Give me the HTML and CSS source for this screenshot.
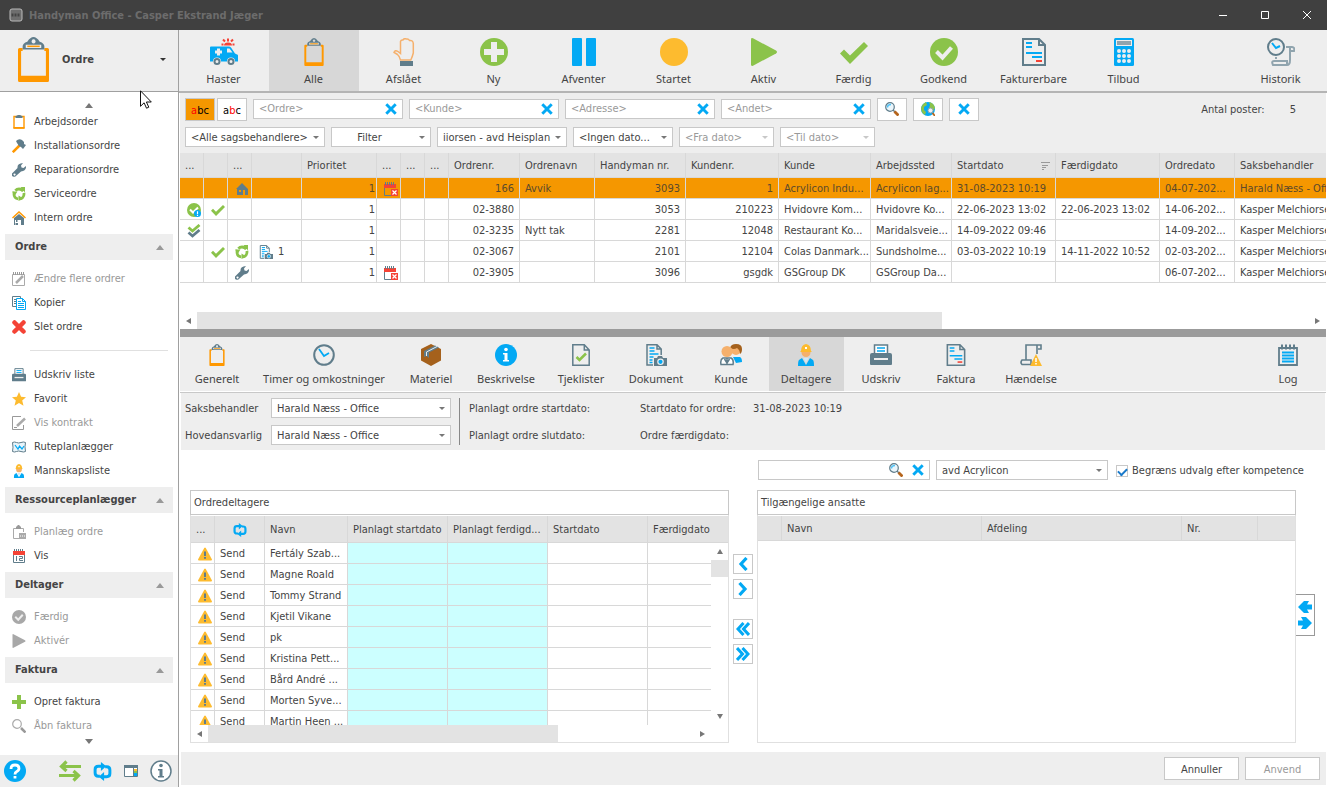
FILE: index.html
```html
<!DOCTYPE html>
<html lang="da">
<head>
  <meta charset="UTF-8" />
  <meta name="viewport" content="width=device-width, initial-scale=1.0"/>
  <title>Handyman Office</title>
  <link rel="stylesheet" href="styles.css">
</head>
<body>
  <!-- Ikoner -->
  <svg class="sprite" aria-hidden="true">
    <symbol id="i-clip" viewBox="0 0 20 29">
      <path fill="#ff9800" d="M0 8q0-1 1-1h2v2H2v16h16V9h-1V7h2q1 0 1 1v20q0 1-1 1H1q-1 0-1-1z"/>
      <path fill="#607d8b" fill-rule="evenodd" d="M3 8V6q0-2 3-3 2-3 4-3t4 3q3 1 3 3v2zM10 1.500a1.300 1.300 0 1 0 .1 0zM5 5v2h10V5z"/>
      <path stroke="#ff9800" d="M6 6h8"/>
    </symbol>
    <symbol id="i-order" viewBox="0 0 14 14">
      <path fill="#fff" stroke="#ff9800" stroke-width="1.400" d="M2 1.500h10v11.300H2z"/><path fill="#ff9800" d="M1.500 12h11v1.800h-11z"/><path fill="#607d8b" d="M3.500 3V1.300L6 0h2l2.500 1.300V3z"/>
    </symbol>
    <symbol id="i-ambulance" viewBox="0 0 28 27">
      <path fill="#03a9f4" d="M0 9q0-1 1-1h18q1 0 2 1l4 6 2 1q1 0 1 1v6H0z"/>
      <path fill="#eee" d="M7 10h3v2h2v3h-2v2H7v-2H5v-3h2zM17 10h2.500l3 4H17z"/>
      <circle cx="7" cy="23" r="4" fill="#eee"/><circle cx="21" cy="23" r="4" fill="#eee"/>
      <circle cx="7" cy="23" r="2.500" fill="none" stroke="#607d8b" stroke-width="2"/><circle cx="21" cy="23" r="2.500" fill="none" stroke="#607d8b" stroke-width="2"/>
      <path fill="#f44336" d="M14 7q0-3 4-3t4 3z"/>
      <path stroke="#f44336" stroke-width="2" d="M18 0v3M13 1l2 2M23 1l-2 2M11.500 6h2M22.500 6h2"/>
    </symbol>
    <symbol id="i-hand" viewBox="0 0 22 28">
      <path fill="none" stroke="#f5b06c" stroke-width="1.500" d="M7.500 22q-1-4-3-5.500L1 14.500q1-3 4-1l2.500 2V3.500q.5-2 2.500-1.500 1-2 3.500-1 2-.5 3 1.500 3.500-.5 3.800 3V15q-1 4-2.500 7z"/>
      <path fill="#607d8b" d="M7 23h13v5H7z"/>
    </symbol>
    <symbol id="i-new" viewBox="0 0 28 28">
      <circle cx="14" cy="14" r="14" fill="#8bc34a"/><path fill="#eee" d="M11 4h6v7h7v6h-7v7h-6v-7H4v-6h7z"/>
    </symbol>
    <symbol id="i-pause" viewBox="0 0 24 28"><path fill="#03a9f4" d="M1 0h8q1 0 1 1v26q0 1-1 1H1q-1 0-1-1V1q0-1 1-1zM15 0h8q1 0 1 1v26q0 1-1 1h-8q-1 0-1-1V1q0-1 1-1z"/></symbol>
    <symbol id="i-dot" viewBox="0 0 28 28"><circle cx="14" cy="14" r="14" fill="#fdbb2f"/></symbol>
    <symbol id="i-play" viewBox="0 0 26 28"><path fill="currentColor" d="M0 1.500Q0-.5 2 .3l23 12.200q2 1.500 0 3L2 27.700q-2 .8-2-1.200z"/></symbol>
    <symbol id="i-check" viewBox="0 0 28 28"><path fill="#8bc34a" d="M0 15.500l4-4 6 6L24 4l4 4-18 18z"/></symbol>
    <symbol id="i-approved" viewBox="0 0 28 28">
      <circle cx="14" cy="14" r="14" fill="currentColor"/><path fill="none" stroke="#eee" stroke-width="4" d="M6.500 13.500l6 6L21.500 9.500"/>
    </symbol>
    <symbol id="i-invoice" viewBox="0 0 24 28">
      <path fill="none" stroke="#607d8b" stroke-width="2" d="M1 1h16l6 6v20H1zM17 1v6h6"/>
      <path stroke="#03a9f4" stroke-width="2" d="M4 5h6M4 9h6M4 15h16M10 19h10"/><path stroke="#f44336" stroke-width="2" d="M14 23h6"/>
    </symbol>
    <symbol id="i-calc" viewBox="0 0 20 28">
      <rect width="20" height="28" rx="1.500" fill="#03a9f4"/><path fill="#eee" d="M2 2h16v6H2z"/><path fill="#90a4ae" d="M3 3h14v4H3z"/>
      <path fill="none" stroke="#eee" stroke-width="4" stroke-linecap="round" stroke-dasharray="0 5" d="M5 13h11M5 18h11M5 23h11"/>
    </symbol>
    <symbol id="i-history" viewBox="0 0 28 28">
      <circle cx="9" cy="9" r="8" fill="none" stroke="#607d8b" stroke-width="2"/><path fill="none" stroke="#03a9f4" stroke-width="2" d="M5 5l4 5 4-2"/>
      <path fill="none" stroke="#90a4ae" stroke-width="2" d="M19 9h6q3 0 2 4h-3M23 9v13q0 5-3 5H6q-2-4 1-4h13v4M9 19v2"/>
    </symbol>
    <symbol id="i-hammer" viewBox="0 0 14 14">
      <path stroke="#ff9800" stroke-width="2.500" d="M.800 13.200L8 6"/><path fill="#607d8b" d="M4 2q3-3 6-1l2 2v2l2 1-3 4-2-2-2-1-2-3z"/>
    </symbol>
    <symbol id="i-wrench" viewBox="0 0 14 14">
      <path fill="#607d8b" d="M11 0L9 2.500l.5 2 2 .5L14 3q.5 5-5 5.500L4.500 12.500q-1.500 2-3.500 1t-1-3L5.500 5Q5 .5 11 0zM2.500 10.500a1 1 0 1 0 .1 0z"/>
    </symbol>
    <symbol id="i-service" viewBox="0 0 14 14">
      <circle cx="7" cy="7" r="5" fill="none" stroke="#8bc34a" stroke-width="2.800" stroke-dasharray="8.900 1.570" stroke-dashoffset="2"/>
      <path fill="#8bc34a" d="M8.500 0h4.500v5.500zM0 4.500h5.500L2.500 9zM6.500 8.500V14l5-2.500z"/>
    </symbol>
    <symbol id="i-house" viewBox="0 0 14 14">
      <path fill="#607d8b" d="M2 7l5-4 5 4v7H9V9H5.500v2H4V9H3v5H2zM3.500 12H6v2H3.500z"/><path fill="none" stroke="#ff9800" stroke-width="1.500" d="M.500 7L7 1l6.500 6"/>
    </symbol>
    <symbol id="i-home" viewBox="0 0 12 12"><path fill="#607d8b" fill-rule="evenodd" d="M0 6l6-6 6 6v6H9V7H7v5H1V6zM3 7v2h2V7z"/></symbol>
    <symbol id="i-notes" viewBox="0 0 14 14">
      <path fill="none" stroke="#aaa" d="M.500 2.500h12v11H.500z"/><path stroke="#999" stroke-width="3" stroke-dasharray="1 1" d="M1 1.500h12"/>
      <path stroke="#aaa" stroke-width="2.500" d="M4 11l7-7"/>
    </symbol>
    <symbol id="i-copy" viewBox="0 0 14 14">
      <path fill="#fff" stroke="#607d8b" d="M.500.500h8v10h-8z"/><path stroke="#607d8b" d="M2 3.500h3M2 5.500h2M2 7.500h2"/>
      <path fill="#fff" stroke="#03a9f4" d="M4.500 2.500h6l3 3v8h-9zM10.500 2.500v3h3M6 5.500h3M6 7.500h6M6 9.500h6M6 11.500h6"/>
    </symbol>
    <symbol id="i-delete" viewBox="0 0 14 14"><path stroke="#f44336" stroke-width="4.500" stroke-linecap="round" d="M2.500 2.500l9 9M11.500 2.500l-9 9"/></symbol>
    <symbol id="i-x" viewBox="0 0 14 14"><path stroke="#03a9f4" stroke-width="3.400" d="M1.500 1.500l11 11M12.500 1.500l-11 11"/></symbol>
    <symbol id="i-print" viewBox="0 0 22 22">
      <path fill="#fff" stroke="#607d8b" stroke-width="1.500" d="M4.500 10V1h13v9"/><path fill="none" stroke="#03a9f4" stroke-width="1.500" d="M7 4h8M7 7h8"/>
      <path fill="#607d8b" d="M2 9h18q2 0 2 2v9q0 1-1 1H1q-1 0-1-1v-9q0-2 2-2z"/><path fill="#eee" d="M4 14h14v2H4z"/>
    </symbol>
    <symbol id="i-star" viewBox="0 0 14 14"><path fill="#fdbb2f" d="M7 0l2.100 4.800 4.900.4-3.800 3.400 1.300 5.200L7 11l-4.500 2.800 1.300-5.200L0 5.200l4.900-.4z"/></symbol>
    <symbol id="i-contract" viewBox="0 0 14 14">
      <path fill="none" stroke="#999" d="M9 .500H.500v13h11V9"/><path stroke="#aaa" stroke-width="2.500" d="M5 10l8-7.500"/><path stroke="#999" d="M2 11.500h3"/>
    </symbol>
    <symbol id="i-map" viewBox="0 0 14 14">
      <path fill="#e8f4fa" stroke="#607d8b" d="M.500 2.500q2-1 4 0t4.500 0 4.500 0q-1 4 0 9-2 1-4.500 0t-4.500 0-4 0q1-4 0-9z"/><path fill="none" stroke="#03a9f4" stroke-width="1.200" d="M3 5l3 4 1.500-3 2.500 3 2-3"/>
    </symbol>
    <symbol id="i-worker" viewBox="0 0 18 22">
      <circle cx="9" cy="8.500" r="4.500" fill="#f5b06c"/><path fill="#fdbb2f" d="M4 7q0-6 5-7 5 1 5 7l1 1H3z"/><path fill="#fff" d="M8 3h2v2H8z"/>
      <path fill="#03a9f4" d="M5 14l4 7 4-7 3 2q1 1 1 6H1q0-5 1-6z"/><path fill="#cfe9f7" d="M6.500 14h5L9 19z"/>
    </symbol>
    <symbol id="i-plan" viewBox="0 0 14 14">
      <path fill="none" stroke="#aaa" d="M7 13.500H1.500v-10h10V7"/><path fill="#999" d="M4 4V2l2-2h1l2 2v2z"/><path fill="#aaa" d="M7 8h7v6H7z"/><path stroke="#fff" stroke-dasharray="1 1" d="M8 11h5"/>
    </symbol>
    <symbol id="i-calendar" viewBox="0 0 14 14">
      <path fill="none" stroke="#607d8b" d="M1.500 5v8.500h11V5"/><path fill="#f44336" d="M1 2h12v4H1z"/><path stroke="#607d8b" stroke-width="2" stroke-dasharray="1 1" d="M2 1h10"/>
      <path fill="none" stroke="#607d8b" d="M4.500 7v5M7 7.500h3.500v2h-3v2h3.500"/>
    </symbol>
    <symbol id="i-plus" viewBox="0 0 14 14"><path fill="#8bc34a" d="M5 0h4v5h5v4H9v5H5V9H0V5h5z"/></symbol>
    <symbol id="i-search-off" viewBox="0 0 14 14"><circle cx="5" cy="5" r="4.300" fill="none" stroke="#aaa" stroke-width="1.200"/><path stroke="#999" stroke-width="2.500" d="M9 9l4.500 4.500"/></symbol>
    <symbol id="i-search" viewBox="0 0 14 14">
      <circle cx="5" cy="5" r="4.300" fill="#eaf6fc" stroke="#607d8b" stroke-width="1.200"/><path fill="none" stroke="#4fc3f7" stroke-width="1.500" d="M2.500 5.500Q2.500 2.500 6 2.500"/>
      <path stroke="#607d8b" stroke-width="1.500" d="M8 8l2 2"/><path stroke="#b5651d" stroke-width="2.800" d="M9.500 9.500l4 4"/>
    </symbol>
    <symbol id="i-globe" viewBox="0 0 14 14">
      <circle cx="7" cy="7" r="7" fill="#03a9f4"/><path fill="#8bc34a" d="M0 6q1-4 5-6l1 3-3 2v3l2 2-1 3Q0 11 0 6zM8 0q5 1 6 6l-2 3-4-3 1-3z"/>
      <circle cx="9.500" cy="8.500" r="2.500" fill="#eee" stroke="#90a4ae"/><path stroke="#b5651d" stroke-width="1.800" d="M11.500 11l2.500 3"/>
    </symbol>
    <symbol id="i-help" viewBox="0 0 22 22">
      <circle cx="11" cy="11" r="11" fill="#03a9f4"/><path fill="none" stroke="#fff" stroke-width="2.800" d="M7 9q0-4 4-4t4 3.500q0 2-2.500 3.200-1.500.8-1.500 2.800M11 16v2.500"/>
    </symbol>
    <symbol id="i-swap" viewBox="0 0 22 20"><path fill="none" stroke="#8bc34a" stroke-width="3.200" d="M22 5.500H3M7.500.5L2.500 5.500l5 4.500M0 14.500h19M14.500 10l5 4.500-5 5"/></symbol>
    <symbol id="i-sync" viewBox="0 0 18 18">
      <path fill="none" stroke="#03a9f4" stroke-width="2.800" d="M6.500 13.500H5q-3 0-3-3V7q0-3 3-3h4M11.500 4.500H13q3 0 3 3V11q0 3-3 3H9"/>
      <path fill="#03a9f4" d="M7.500 0l5 4-5 4.500zM10.500 9.500l-5 4.500 5 4z"/>
    </symbol>
    <symbol id="i-panel" viewBox="0 0 14 12">
      <path fill="#fff" stroke="#607d8b" d="M.500.500h13v11H.500z"/><path fill="#607d8b" d="M0 0h14v3H0z"/>
      <path fill="#fdbb2f" d="M10 4h3v2h-3z"/><path fill="#8bc34a" d="M10 6h3v2h-3z"/><path fill="#03a9f4" d="M10 8h3v3h-3z"/><path stroke="#607d8b" d="M9.500 3v9"/>
    </symbol>
    <symbol id="i-info-o" viewBox="0 0 22 22">
      <circle cx="11" cy="11" r="10" fill="#fff" stroke="#607d8b" stroke-width="1.500"/><circle cx="11" cy="5.500" r="1.800" fill="#607d8b"/><path fill="#607d8b" d="M8 9h4.500v7H14v1.500H8V16h1.500v-5.500H8z"/>
    </symbol>
    <symbol id="i-info" viewBox="0 0 22 22">
      <circle cx="11" cy="11" r="11" fill="#03a9f4"/><circle cx="11" cy="5.500" r="1.800" fill="#fff"/><path fill="#fff" d="M8 9h4.500v7H14v1.500H8V16h1.500v-5.500H8z"/>
    </symbol>
    <symbol id="i-clock" viewBox="0 0 22 22"><circle cx="11" cy="11" r="9.800" fill="none" stroke="#607d8b" stroke-width="2"/><path fill="none" stroke="#03a9f4" stroke-width="1.800" d="M6 5l5 7 5-3"/></symbol>
    <symbol id="i-box" viewBox="0 0 20 22">
      <path fill="#a5611c" d="M0 5l10-5 10 5v11.500L10 22 0 16.500z"/><path fill="#607d8b" d="M3 7L14 1.500l4 2L8 8.500V14l-2.500-2-2.500 1z"/><path fill="none" stroke="#eee" d="M5.500 12V8L16 2.500"/>
    </symbol>
    <symbol id="i-checklist" viewBox="0 0 18 22"><path fill="none" stroke="#607d8b" stroke-width="1.500" d="M.800.800h11.500L17.200 6v15.200H.800zM12.300.800V6h5"/><path fill="none" stroke="#8bc34a" stroke-width="2.500" d="M4.500 13l3 3 6.500-6.500"/></symbol>
    <symbol id="i-doc" viewBox="0 0 22 22">
      <path fill="none" stroke="#607d8b" stroke-width="1.500" d="M8 21H2V.800h10L16.200 5v6M12 .800V5h4.200"/><path stroke="#03a9f4" stroke-width="1.500" d="M4.500 4h5M4.500 7h5M4.500 10h9M4.500 13h4M4.500 16h3M4.500 18.500h3"/>
      <path fill="#607d8b" d="M9 14h3l1-2h4l1 2h4v8H9z"/><circle cx="15.500" cy="17.800" r="2.700" fill="#03a9f4" stroke="#eee" stroke-width="1.200"/>
    </symbol>
    <symbol id="i-people" viewBox="0 0 22 22">
      <circle cx="16" cy="6" r="5" fill="#f5b06c"/><path fill="#a5611c" d="M10 4q1-4 6-4 6 0 6 5 0 4-2 5 0-4-3-6-3 2-7 0z"/><path fill="#03a9f4" d="M13 13h7q2 1 2 5l-6 1z"/>
      <circle cx="7" cy="7.500" r="5.500" fill="#f5b06c"/><path fill="#fff" stroke="#607d8b" stroke-width="1.500" d="M1 20.500q-1-5 2-6.500h8q3 1.500 2 6.500z"/><path fill="none" stroke="#607d8b" stroke-width="1.500" d="M7 20v-6M4.500 15l2.500 4 2.500-4"/>
    </symbol>
    <symbol id="i-event" viewBox="0 0 22 22">
      <path fill="none" stroke="#607d8b" stroke-width="1.600" d="M6 16V1h15v4h-3M17 1v9M2 16h9v4.500H2q-2-2 0-4.500z"/><path fill="#fdbb2f" d="M16 10l6 12H10z"/><path stroke="#fff" stroke-width="1.500" d="M16 14v4M16 19v1.500"/>
    </symbol>
    <symbol id="i-log" viewBox="0 0 20 22">
      <path fill="none" stroke="#607d8b" stroke-width="1.800" d="M1 4h18v17H1z"/><path stroke="#607d8b" stroke-width="5" stroke-dasharray="2 2" d="M3 3h14"/><path stroke="#03a9f4" stroke-width="1.800" d="M4 8.500h12M4 11.500h12M4 14.500h12M4 17.500h12"/>
    </symbol>
    <symbol id="i-noevent" viewBox="0 0 14 14">
      <path fill="none" stroke="#607d8b" d="M.500 5v8.500H7"/><path fill="#f44336" d="M0 2h12v4H0zM7 7h7v7H7z"/><path stroke="#607d8b" stroke-width="3" stroke-dasharray="1 1" d="M1 1.500h10"/><path stroke="#fff" stroke-width="1.200" d="M8.500 8.500l4 4M12.500 8.500l-4 4"/>
    </symbol>
    <symbol id="i-status" viewBox="0 0 14 14">
      <circle cx="7" cy="7" r="7" fill="#8bc34a"/><path fill="none" stroke="#fff" stroke-width="2" d="M3 6.500l3 3 5-5"/><circle cx="10.500" cy="10.500" r="3.500" fill="#03a9f4"/><path stroke="#fff" stroke-width="1.200" d="M10.500 8.200v2.800M10.500 11.800V13"/>
    </symbol>
    <symbol id="i-double" viewBox="0 0 14 14">
      <path fill="none" stroke="#607d8b" stroke-width="2.800" d="M1.500 8.500l4 3.500L12.500 6"/><path fill="none" stroke="#8bc34a" stroke-width="2.800" d="M1.500 3.500l4 3.500L12.500 1"/>
    </symbol>
    <symbol id="i-warn" viewBox="0 0 14 13"><path fill="#fdbb2f" d="M6.200.5q.8-1 1.600 0L14 12q0 1-1 1H1q-1 0-1-1z"/><path stroke="#607d8b" stroke-width="2" d="M7 4v4.500M7 9.500v1.800"/></symbol>
    <symbol id="i-left" viewBox="0 0 14 14"><path fill="none" stroke="#03a9f4" stroke-width="3.200" d="M10.500 1L5 7l5.500 6"/></symbol>
    <symbol id="i-right" viewBox="0 0 14 14"><path fill="none" stroke="#03a9f4" stroke-width="3.200" d="M3.500 1L9 7l-5.500 6"/></symbol>
    <symbol id="i-left2" viewBox="0 0 14 14"><path fill="none" stroke="#03a9f4" stroke-width="3" d="M7.500 1L2 7l5.500 6M13 1L7.500 7l5.500 6"/></symbol>
    <symbol id="i-right2" viewBox="0 0 14 14"><path fill="none" stroke="#03a9f4" stroke-width="3" d="M1 1l5.500 6L1 13M6.500 1L12 7l-5.500 6"/></symbol>
    <symbol id="i-exchange" viewBox="0 0 14 30">
      <path fill="#03a9f4" d="M0 7l6-6h5L9 4.500h5v5H9l2 3.500H6zM14 23l-6-6H3l2 3.500H0v5h5L3 29h5z"/>
    </symbol>
  </svg>

  <div class="app">
    <header class="titlebar">
      <svg class="app-icon" viewBox="0 0 14 14"><rect x="1" y="1" width="12" height="12" rx="2" fill="#6e6e6e" stroke="#bbb"/><path stroke="#444" stroke-width="3" stroke-dasharray="2 1" d="M2.500 7h9"/></svg>
      <h1>Handyman Office - Casper Ekstrand Jæger</h1>
      <button class="win-btn" aria-label="Minimer"><svg viewBox="0 0 10 10"><path d="M1 5.500h8"/></svg></button>
      <button class="win-btn" aria-label="Maksimer"><svg viewBox="0 0 10 10"><path d="M1.500 1.500h7v7h-7z"/></svg></button>
      <button class="win-btn" aria-label="Luk"><svg viewBox="0 0 10 10"><path d="M1 1l8 8M9 1l-8 8"/></svg></button>
    </header>

    <div class="workspace">
      <!-- SIDEMENU -->
      <aside class="sidebar">
        <button class="module">
          <svg class="module-icon"><use href="#i-clip"/></svg>
          <span>Ordre</span>
          <i class="caret dark"></i>
        </button>
        <nav class="menu">
          <div class="menu-scroll top"><i class="tri up"></i></div>
          <ul>
            <li><a href="#"><svg><use href="#i-order"/></svg>Arbejdsorder</a></li>
            <li><a href="#"><svg><use href="#i-hammer"/></svg>Installationsordre</a></li>
            <li><a href="#"><svg><use href="#i-wrench"/></svg>Reparationsordre</a></li>
            <li><a href="#"><svg><use href="#i-service"/></svg>Serviceordre</a></li>
            <li><a href="#"><svg><use href="#i-house"/></svg>Intern ordre</a></li>
          </ul>
          <h2>Ordre<i class="tri up"></i></h2>
          <ul>
            <li><a href="#" class="off"><svg><use href="#i-notes"/></svg>Ændre flere ordrer</a></li>
            <li><a href="#"><svg><use href="#i-copy"/></svg>Kopier</a></li>
            <li><a href="#"><svg><use href="#i-delete"/></svg>Slet ordre</a></li>
            <li class="divider"></li>
            <li><a href="#"><svg><use href="#i-print"/></svg>Udskriv liste</a></li>
            <li><a href="#"><svg><use href="#i-star"/></svg>Favorit</a></li>
            <li><a href="#" class="off"><svg><use href="#i-contract"/></svg>Vis kontrakt</a></li>
            <li><a href="#"><svg><use href="#i-map"/></svg>Ruteplanlægger</a></li>
            <li><a href="#"><svg><use href="#i-worker"/></svg>Mannskapsliste</a></li>
          </ul>
          <h2>Ressourceplanlægger<i class="tri up"></i></h2>
          <ul>
            <li><a href="#" class="off"><svg><use href="#i-plan"/></svg>Planlæg ordre</a></li>
            <li><a href="#"><svg><use href="#i-calendar"/></svg>Vis</a></li>
          </ul>
          <h2>Deltager<i class="tri up"></i></h2>
          <ul>
            <li><a href="#" class="off"><svg><use href="#i-approved"/></svg>Færdig</a></li>
            <li><a href="#" class="off"><svg><use href="#i-play"/></svg>Aktivér</a></li>
          </ul>
          <h2>Faktura<i class="tri up"></i></h2>
          <ul>
            <li><a href="#"><svg><use href="#i-plus"/></svg>Opret faktura</a></li>
            <li><a href="#" class="off"><svg><use href="#i-search-off"/></svg>Åbn faktura</a></li>
          </ul>
          <div class="menu-scroll"><i class="tri down"></i></div>
        </nav>
        <div class="side-footer">
          <button class="help" aria-label="Hjælp"><svg><use href="#i-help"/></svg></button>
          <button aria-label="Synkroniser"><svg><use href="#i-swap"/></svg></button>
          <button aria-label="Opdater"><svg class="medium"><use href="#i-sync"/></svg></button>
          <button aria-label="Panel"><svg class="small"><use href="#i-panel"/></svg></button>
          <button aria-label="Om"><svg><use href="#i-info-o"/></svg></button>
        </div>
      </aside>

      <main class="main">
        <!-- STATUSLINJE -->
        <div class="toolbar">
          <button><svg><use href="#i-ambulance"/></svg>Haster</button>
          <button class="active"><svg><use href="#i-clip"/></svg>Alle</button>
          <button><svg><use href="#i-hand"/></svg>Afslået</button>
          <button><svg><use href="#i-new"/></svg>Ny</button>
          <button><svg><use href="#i-pause"/></svg>Afventer</button>
          <button><svg><use href="#i-dot"/></svg>Startet</button>
          <button><svg class="green"><use href="#i-play"/></svg>Aktiv</button>
          <button><svg><use href="#i-check"/></svg>Færdig</button>
          <button><svg class="green"><use href="#i-approved"/></svg>Godkend</button>
          <button><svg><use href="#i-invoice"/></svg>Fakturerbare</button>
          <button><svg><use href="#i-calc"/></svg>Tilbud</button>
          <button class="last"><svg><use href="#i-history"/></svg>Historik</button>
        </div>

        <!-- FILTRE -->
        <div class="filters">
          <div class="filter-row">
            <div class="abc-group">
              <button class="btn abc on"><b>a</b>bc</button>
              <button class="btn abc">a<b>b</b>c</button>
            </div>
            <div class="field"><input type="text" aria-label="Ordre" placeholder="&lt;Ordre&gt;"><button aria-label="Ryd"><svg><use href="#i-x"/></svg></button></div>
            <div class="field"><input type="text" aria-label="Kunde" placeholder="&lt;Kunde&gt;"><button aria-label="Ryd"><svg><use href="#i-x"/></svg></button></div>
            <div class="field"><input type="text" aria-label="Adresse" placeholder="&lt;Adresse&gt;"><button aria-label="Ryd"><svg><use href="#i-x"/></svg></button></div>
            <div class="field"><input type="text" aria-label="Andet" placeholder="&lt;Andet&gt;"><button aria-label="Ryd"><svg><use href="#i-x"/></svg></button></div>
            <button class="btn" aria-label="Søg"><svg><use href="#i-search"/></svg></button>
            <button class="btn" aria-label="Søg på kort"><svg><use href="#i-globe"/></svg></button>
            <button class="btn" aria-label="Nulstil"><svg class="clear"><use href="#i-x"/></svg></button>
            <p class="count"><span>Antal poster:</span><span>5</span></p>
          </div>
          <div class="filter-row">
            <div class="select w140"><select aria-label="Sagsbehandler"><option>&lt;Alle sagsbehandlere&gt;</option></select></div>
            <div class="select w100 center"><select aria-label="Filter"><option>Filter</option></select></div>
            <div class="select w130"><select aria-label="Afdeling"><option>iiorsen - avd Heisplan</option></select></div>
            <div class="select w100"><select aria-label="Datotype"><option>&lt;Ingen dato...</option></select></div>
            <div class="select w95"><select aria-label="Fra dato" disabled><option>&lt;Fra dato&gt;</option></select></div>
            <div class="select w95"><select aria-label="Til dato" disabled><option>&lt;Til dato&gt;</option></select></div>
          </div>
        </div>

        <!-- ORDRELISTE -->
        <div class="order-list">
          <table class="grid orders">
            <colgroup>
              <col class="c24"><col class="c24"><col class="c24"><col class="c50"><col class="c75"><col class="c24"><col class="c24"><col class="c24">
              <col class="c71"><col class="c75"><col class="c91"><col class="c93"><col class="c92"><col class="c81"><col class="c104"><col class="c104"><col class="c75"><col>
            </colgroup>
            <thead>
              <tr>
                <th>...</th><th></th><th>...</th><th></th><th>Prioritet</th><th>...</th><th>...</th><th>...</th><th>Ordrenr.</th><th>Ordrenavn</th>
                <th>Handyman nr.</th><th>Kundenr.</th><th>Kunde</th><th>Arbejdssted</th>
                <th><span class="sorted">Startdato<svg viewBox="0 0 9 8"><path d="M0 .5h9M1 3.500h6M1 5.500h4M1 7.500h2"/></svg></span></th>
                <th>Færdigdato</th><th>Ordredato</th><th>Saksbehandler</th>
              </tr>
            </thead>
            <tbody>
              <tr class="selected">
                <td></td><td></td><td><svg class="home"><use href="#i-home"/></svg></td><td></td><td class="prio">1</td><td><svg><use href="#i-noevent"/></svg></td><td></td><td></td>
                <td class="num">166</td><td>Avvik</td><td class="num">3093</td><td class="num">1</td><td>Acrylicon Indu...</td><td>Acrylicon lag...</td><td>31-08-2023 10:19</td><td></td><td>04-07-202...</td><td>Harald Næss - Office</td>
              </tr>
              <tr>
                <td><svg><use href="#i-status"/></svg></td><td><svg><use href="#i-check"/></svg></td><td></td><td></td><td class="prio">1</td><td></td><td></td><td></td>
                <td class="num">02-3880</td><td></td><td class="num">3053</td><td class="num">210223</td><td>Hvidovre Kom...</td><td>Hvidovre Ko...</td><td>22-06-2023 13:02</td><td>22-06-2023 13:02</td><td>14-06-202...</td><td>Kasper Melchiorsen</td>
              </tr>
              <tr>
                <td><svg><use href="#i-double"/></svg></td><td></td><td></td><td></td><td class="prio">1</td><td></td><td></td><td></td>
                <td class="num">02-3235</td><td>Nytt tak</td><td class="num">2281</td><td class="num">12048</td><td>Restaurant Ko...</td><td>Maridalsveie...</td><td>14-09-2022 09:46</td><td></td><td>14-09-202...</td><td>Kasper Melchiorsen</td>
              </tr>
              <tr>
                <td></td><td><svg><use href="#i-check"/></svg></td><td><svg><use href="#i-service"/></svg></td><td><span class="attach"><svg><use href="#i-doc"/></svg>1</span></td><td class="prio">1</td><td></td><td></td><td></td>
                <td class="num">02-3067</td><td></td><td class="num">2101</td><td class="num">12104</td><td>Colas Danmark...</td><td>Sundsholme...</td><td>03-03-2022 10:19</td><td>14-11-2022 10:52</td><td>02-03-202...</td><td>Kasper Melchiorsen</td>
              </tr>
              <tr>
                <td></td><td></td><td><svg><use href="#i-wrench"/></svg></td><td></td><td class="prio">1</td><td><svg><use href="#i-noevent"/></svg></td><td></td><td></td>
                <td class="num">02-3905</td><td></td><td class="num">3096</td><td class="num">gsgdk</td><td>GSGroup DK</td><td>GSGroup Da...</td><td></td><td></td><td>06-07-202...</td><td>Kasper Melchiorsen</td>
              </tr>
            </tbody>
          </table>
        </div>
        <div class="hscroll"><i class="tri left"></i><div class="track"><div class="thumb orders-thumb"></div></div><i class="tri right"></i></div>
        <div class="splitter"></div>

        <!-- FANER -->
        <div class="tabs">
          <button><svg><use href="#i-clip"/></svg>Generelt</button>
          <button class="wide"><svg><use href="#i-clock"/></svg>Timer og omkostninger</button>
          <button><svg><use href="#i-box"/></svg>Materiel</button>
          <button><svg><use href="#i-info"/></svg>Beskrivelse</button>
          <button><svg><use href="#i-checklist"/></svg>Tjeklister</button>
          <button><svg><use href="#i-doc"/></svg>Dokument</button>
          <button><svg><use href="#i-people"/></svg>Kunde</button>
          <button class="active"><svg><use href="#i-worker"/></svg>Deltagere</button>
          <button><svg><use href="#i-print"/></svg>Udskriv</button>
          <button><svg><use href="#i-invoice"/></svg>Faktura</button>
          <button><svg><use href="#i-event"/></svg>Hændelse</button>
          <button class="last"><svg><use href="#i-log"/></svg>Log</button>
        </div>

        <div class="details">
          <div class="owners">
            <label for="saks">Saksbehandler</label>
            <div class="select"><select id="saks"><option>Harald Næss - Office</option></select></div>
            <label for="hoved">Hovedansvarlig</label>
            <div class="select"><select id="hoved"><option>Harald Næss - Office</option></select></div>
          </div>
          <div class="dates">
            <span>Planlagt ordre startdato:</span><span>Startdato for ordre:</span><span>31-08-2023 10:19</span>
            <span>Planlagt ordre slutdato:</span><span>Ordre færdigdato:</span><span></span>
          </div>
        </div>

        <!-- DELTAGERE -->
        <div class="participants">
          <div class="employee-search">
            <div class="field"><input type="text" aria-label="Søg ansatte"><button aria-label="Søg"><svg class="find"><use href="#i-search"/></svg></button><button aria-label="Ryd"><svg><use href="#i-x"/></svg></button></div>
            <div class="select"><select aria-label="Afdeling"><option>avd Acrylicon</option></select></div>
            <label class="check"><input type="checkbox" checked>Begræns udvalg efter kompetence</label>
          </div>

          <section class="panel">
            <h3>Ordredeltagere</h3>
            <div class="panel-body">
              <table class="grid members">
                <colgroup><col class="c24"><col class="c50"><col class="c83"><col class="c100"><col class="c100"><col class="c100"><col></colgroup>
                <thead>
                  <tr><th>...</th><th class="sync"><svg><use href="#i-sync"/></svg></th><th>Navn</th><th>Planlagt startdato</th><th>Planlagt ferdigd...</th><th>Startdato</th><th>Færdigdato</th></tr>
                </thead>
                <tbody>
                  <tr><td><svg><use href="#i-warn"/></svg></td><td>Send</td><td>Fertály Szab...</td><td class="plan"></td><td class="plan"></td><td></td><td></td></tr>
                  <tr><td><svg><use href="#i-warn"/></svg></td><td>Send</td><td>Magne Roald</td><td class="plan"></td><td class="plan"></td><td></td><td></td></tr>
                  <tr><td><svg><use href="#i-warn"/></svg></td><td>Send</td><td>Tommy Strand</td><td class="plan"></td><td class="plan"></td><td></td><td></td></tr>
                  <tr><td><svg><use href="#i-warn"/></svg></td><td>Send</td><td>Kjetil Vikane</td><td class="plan"></td><td class="plan"></td><td></td><td></td></tr>
                  <tr><td><svg><use href="#i-warn"/></svg></td><td>Send</td><td>pk</td><td class="plan"></td><td class="plan"></td><td></td><td></td></tr>
                  <tr><td><svg><use href="#i-warn"/></svg></td><td>Send</td><td>Kristina Pett...</td><td class="plan"></td><td class="plan"></td><td></td><td></td></tr>
                  <tr><td><svg><use href="#i-warn"/></svg></td><td>Send</td><td>Bård André ...</td><td class="plan"></td><td class="plan"></td><td></td><td></td></tr>
                  <tr><td><svg><use href="#i-warn"/></svg></td><td>Send</td><td>Morten Syve...</td><td class="plan"></td><td class="plan"></td><td></td><td></td></tr>
                  <tr><td><svg><use href="#i-warn"/></svg></td><td>Send</td><td>Martin Heen ...</td><td class="plan"></td><td class="plan"></td><td></td><td></td></tr>
                </tbody>
              </table>
              <div class="vscroll"><i class="tri up"></i><div class="thumb"></div><i class="tri down"></i></div>
            </div>
            <div class="hscroll inset"><i class="tri left"></i><div class="track"><div class="thumb members-thumb"></div></div><i class="tri right"></i></div>
          </section>

          <div class="movers">
            <button aria-label="Tilføj"><svg><use href="#i-left"/></svg></button>
            <button aria-label="Fjern"><svg><use href="#i-right"/></svg></button>
            <button class="all" aria-label="Tilføj alle"><svg><use href="#i-left2"/></svg></button>
            <button aria-label="Fjern alle"><svg><use href="#i-right2"/></svg></button>
          </div>

          <section class="panel">
            <h3>Tilgængelige ansatte</h3>
            <table class="grid employees">
              <colgroup><col class="c24"><col class="c200"><col class="c200"><col class="c76"><col></colgroup>
              <thead><tr><th></th><th>Navn</th><th>Afdeling</th><th>Nr.</th><th></th></tr></thead>
            </table>
          </section>

          <button class="side-tab" aria-label="Skift visning"><svg><use href="#i-exchange"/></svg></button>
        </div>

        <footer class="actions">
          <button>Annuller</button>
          <button disabled>Anvend</button>
        </footer>
      </main>
    </div>
  </div>

  <svg class="pointer" viewBox="0 0 12 19"><path fill="#fff" stroke="#111" d="M.500.800v15.500l3.600-3.500 2.400 5.400 2.300-1-2.400-5.200h4.900z"/></svg>
</body>
</html>
```
FILE: styles.css
```css
:root {
  --bar: #eeeeee;
  --head: #e3e3e3;
  --active: #d7d7d7;
  --line: #c8c8c8;
  --cell: #d8d8d8;
  --text: #444444;
  --muted: #999999;
  --orange: #f59700;
  --green: #8bc34a;
}
* { box-sizing: border-box; margin: 0; padding: 0; }
body {
  background: #fff;
  color: var(--text);
  font-family: "DejaVu Sans Condensed", "Noto Sans", sans-serif;
  font-size: 11px;
  line-height: 14px;
}
button, input, select {
  font: inherit;
  color: inherit;
  background: none;
  border: 0;
  border-radius: 0;
  outline: 0;
}
button { white-space: nowrap; }
svg { display: block; }
ul { list-style: none; }
a { color: inherit; text-decoration: none; }
.sprite { position: absolute; width: 0; height: 0; }
.pointer { position: absolute; left: 140px; top: 90px; width: 12px; height: 19px; }

.app { display: flex; flex-direction: column; height: 100vh; }
.workspace { display: flex; flex: 1; min-height: 0; }

/* TITELLINJE */
.titlebar {
  display: flex;
  align-items: center;
  height: 30px;
  padding-left: 9px;
  background: #404040;
}
.titlebar h1 { flex: 1; margin-left: 6px; padding-top: 2px; font-size: 11px; color: #6c6c6c; }
.app-icon { width: 14px; height: 14px; }
.win-btn { display: grid; place-items: center; width: 42px; height: 30px; padding-left: 2px; }
.win-btn svg { width: 10px; height: 10px; fill: none; stroke: #fff; }

/* PILE */
.tri { width: 0; height: 0; border: 3px solid transparent; }
.tri.up { border-top: 0; border-bottom: 5px solid #777; }
.tri.down { border-bottom: 0; border-top: 5px solid #777; }
.tri.left { border-left: 0; border-right: 5px solid #777; }
.tri.right { border-right: 0; border-left: 5px solid #777; }
.menu .tri { border-left-width: 4px; border-right-width: 4px; }
.menu h2 .tri { border-bottom-color: #999; }
.caret { border: 3px solid transparent; border-bottom: 0; border-top-color: #777; }
.caret.dark { border-top-color: #333; }

/* SIDEMENU */
.sidebar {
  display: flex;
  flex-direction: column;
  flex: none;
  width: 179px;
  border-right: 1px solid #a0a0a0;
}
.module {
  display: flex;
  align-items: center;
  height: 62px;
  padding: 0 12px 2px 18px;
  background: var(--bar);
  border-bottom: 1px solid #a0a0a0;
  font-weight: bold;
  font-size: 11px;
}
.module-icon { width: 31px; height: 45px; }
.module span { flex: 1; margin-left: 13px; text-align: left; }
.menu { flex: 1; min-height: 0; overflow: hidden; }
.menu-scroll { display: flex; justify-content: center; padding-top: 2px; }
.menu-scroll.top { height: 17px; padding-top: 11px; }
.menu li { height: 24px; }
.menu a { display: flex; align-items: center; height: 24px; padding: 2px 0 0 12px; gap: 8px; }
.menu a svg { width: 14px; height: 14px; }
.menu a.off { color: var(--muted); }
.menu .off svg { color: #a8a8a8; }
.menu .divider { display: flex; align-items: center; padding: 0 10px 0 30px; }
.menu .divider::before { content: ""; flex: 1; border-top: 1px solid #e0e0e0; }
.menu h2 {
  display: flex;
  align-items: center;
  justify-content: space-between;
  height: 26px;
  margin: 5px 5px 6px;
  padding: 0 9px 0 10px;
  background: var(--bar);
  font-size: 11px;
}
.side-footer {
  display: flex;
  align-items: center;
  gap: 12px;
  height: 32px;
  padding: 0 6px 0 4px;
  background: var(--bar);
}
.side-footer svg { width: 22px; height: 22px; }
.side-footer .help { margin-right: auto; }
.side-footer svg.medium { width: 19px; height: 19px; }
.side-footer svg.small { width: 14px; height: 12px; }

/* VÆRKTØJSLINJE */
.main { display: flex; flex-direction: column; flex: 1; min-width: 0; padding: 0 1px; }
.toolbar, .tabs { display: flex; background: var(--bar); font-family: "Noto Sans", sans-serif; font-size: 11px; }
.toolbar { margin: 0 -1px; padding-right: 1px; border-bottom: 2px solid #b4b4b4; }
.toolbar button, .tabs button {
  display: flex;
  flex-direction: column;
  align-items: center;
  flex: 0 1 90px;
  min-width: 0;
  height: 61px;
  padding: 8px 1px 0 0;
  line-height: 16px;
}
.toolbar svg { width: 28px; height: 28px; margin-bottom: 5px; }
.toolbar .active, .tabs .active { background: var(--active); }
.green { color: var(--green); }
.toolbar .last, .tabs .last { margin-left: auto; }

/* FILTRE */
.filters { padding: 5px 0 6px 5px; background: var(--bar); }
.filter-row { display: flex; align-items: flex-start; gap: 6px; }
.filter-row + .filter-row { margin-top: 6px; }
.filter-row .field { margin-top: 1px; }
.abc-group { display: flex; gap: 2px; }
.btn {
  display: grid;
  place-items: center;
  width: 30px;
  height: 23px;
  background: #fff;
  border: 1px solid var(--line);
}
.btn svg { width: 14px; height: 14px; margin-bottom: 2px; }
.btn svg.clear { width: 12px; height: 12px; }
.abc { display: block; padding-top: 2px; color: #000; }
.abc b { color: red; font-weight: normal; }
.abc.on { background: var(--orange); }
.field {
  display: flex;
  align-items: center;
  gap: 9px;
  width: 150px;
  height: 20px;
  padding: 0 5px;
  background: #fff;
  border: 1px solid var(--line);
}
.field svg { width: 12px; height: 12px; }
.field svg.find { width: 14px; height: 14px; }
.field input { flex: 1; min-width: 0; }
.field input::placeholder { color: var(--muted); opacity: 1; }
.count { display: flex; align-self: center; gap: 25px; margin-left: auto; padding-right: 30px; }
.select { position: relative; height: 20px; background: #fff; border: 1px solid var(--line); }
.select select { display: block; appearance: none; width: 100%; height: 18px; padding: 1px 12px 0 5px; opacity: 1; }
.select.center select { text-align: center; text-align-last: center; padding-right: 28px; }
.select select:disabled { color: var(--muted); }
.select::after {
  content: "";
  position: absolute;
  right: 5px;
  top: 8px;
  border: 3px solid transparent;
  border-bottom: 0;
  border-top-color: #777;
  pointer-events: none;
}
.select:has(:disabled)::after { border-top-color: var(--line); }
.w95 { width: 95px; }
.w100 { width: 100px; }
.w130 { width: 130px; }
.w140 { width: 140px; }

/* TABELLER */
.grid { width: 100%; table-layout: fixed; border-collapse: separate; border-spacing: 0; }
.grid th, .grid td {
  border-right: 1px solid var(--cell);
  border-bottom: 1px solid var(--cell);
  overflow: hidden;
  white-space: nowrap;
  text-align: left;
  font-weight: normal;
}
.grid th { height: 25px; padding: 2px 5px 0; background: var(--head); }
.grid td { height: 21px; padding: 2px 5px 0; }
.grid th:last-child, .grid td:last-child { border-right: 0; }
.grid td svg { width: 14px; height: 14px; margin: 0 0 1px 2px; }
.grid .num { text-align: right; }
.grid .prio { text-align: right; padding-right: 1px; }
.grid .selected td { background: var(--orange); color: #5c4a2c; }
.grid svg.home { width: 12px; height: 12px; margin-left: 3px; }
.sorted { display: flex; align-items: center; justify-content: space-between; }
.sorted svg { width: 9px; height: 8px; stroke: #999; }
.attach { display: flex; align-items: center; gap: 5px; }
.order-list { min-height: 159px; }
.c24 { width: 24px; }
.c50 { width: 50px; }
.c71 { width: 71px; }
.c75 { width: 75px; }
.c76 { width: 76px; }
.c81 { width: 81px; }
.c83 { width: 83px; }
.c91 { width: 91px; }
.c92 { width: 92px; }
.c93 { width: 93px; }
.c100 { width: 100px; }
.c104 { width: 104px; }
.c200 { width: 200px; }

/* RULLEPANELER */
.hscroll { display: flex; align-items: center; flex: none; height: 17px; padding: 0 6px; }
.hscroll .track { flex: 1; height: 17px; margin: 0 6px; }
.hscroll.inset { margin-right: 17px; }
.thumb { height: 17px; background: var(--head); }
.orders-thumb { width: 67%; }
.members-thumb { width: 72%; }
.vscroll {
  position: relative;
  display: flex;
  flex-direction: column;
  align-items: center;
  width: 17px;
  margin-top: 27px;
  padding: 6px 0;
  background: #fff;
}
.vscroll .thumb { width: 17px; margin: 6px 0 auto; }
.splitter { height: 8px; background: #9b9b9b; }

/* FANER */
.tabs { border-bottom: 1px solid #fff; box-shadow: 0 1px 0 var(--line); }
.tabs button { flex-basis: 75px; height: 54px; padding-top: 7px; }
.tabs .wide { flex-basis: 139px; }
.tabs svg { width: 22px; height: 22px; margin-bottom: 5px; }

/* DETALJER */
.details { display: flex; margin: 1px 1px 0; padding: 5px 4px; background: var(--bar); }
.owners { display: grid; grid-template-columns: 86px 180px; align-items: center; row-gap: 7px; }
.owners label, .dates span { padding-top: 2px; }
.dates {
  display: grid;
  grid-template-columns: 171px 113px auto;
  align-items: center;
  row-gap: 7px;
  grid-auto-rows: 20px;
  margin-left: 8px;
  padding-left: 9px;
  border-left: 1px solid #888;
}

/* DELTAGERE */
.participants {
  display: grid;
  grid-template-columns: minmax(0, 1fr) 20px minmax(0, 1fr) 15px;
  grid-template-rows: 20px minmax(0, 1fr);
  column-gap: 4px;
  row-gap: 10px;
  flex: 1;
  min-height: 0;
  padding: 10px 11px 9px 10px;
}
.employee-search { grid-column: 3 / 5; display: flex; align-items: center; gap: 6px; padding-left: 1px; }
.employee-search .field, .employee-search .select { width: 172px; }
.check { display: flex; align-items: center; gap: 4px; margin-left: 2px; padding-top: 2px; white-space: nowrap; }
.check input { appearance: none; display: grid; place-items: center; width: 12px; height: 12px; border: 1px solid var(--line); }
.check input:checked::before {
  content: "";
  width: 7px;
  height: 4px;
  border: solid #1979ca;
  border-width: 0 0 2px 2px;
  transform: rotate(-45deg);
}
.panel { display: flex; flex-direction: column; min-height: 0; border: 1px solid #e0e0e0; border-top: 0; }
.panel h3 {
  flex: none;
  height: 25px;
  margin: 0 -1px 1px;
  padding-left: 3px;
  border: 1px solid var(--line);
  font-size: 11px;
  font-weight: normal;
  line-height: 23px;
}
.panel-body { display: flex; flex: 1; min-height: 0; overflow: hidden; }
.members { flex: 1; align-self: flex-start; margin-right: -17px; }
.members th { height: 27px; }
.sync svg { width: 14px; height: 14px; margin: auto; }
.plan { background: #ccffff; }
.movers { display: flex; flex-direction: column; gap: 5px; padding-top: 64px; }
.movers button { display: grid; place-items: center; width: 20px; height: 20px; border: 1px solid var(--line); }
.movers .all { margin-top: 15px; }
.movers svg { width: 14px; height: 14px; }
.side-tab {
  display: grid;
  place-items: center;
  width: 19px;
  height: 42px;
  margin: 104px 0 0 -4px;
  border: 1px solid #999;
  border-left: 0;
}
.side-tab svg { width: 14px; height: 30px; }

/* KNAPPER */
.actions {
  display: flex;
  justify-content: flex-end;
  gap: 6px;
  margin: 0 0 2px 1px;
  padding: 5px 6px;
  background: var(--bar);
}
.actions button { width: 75px; height: 23px; padding-top: 2px; background: #fff; border: 1px solid var(--line); }
.actions button:disabled { color: var(--muted); }
```
